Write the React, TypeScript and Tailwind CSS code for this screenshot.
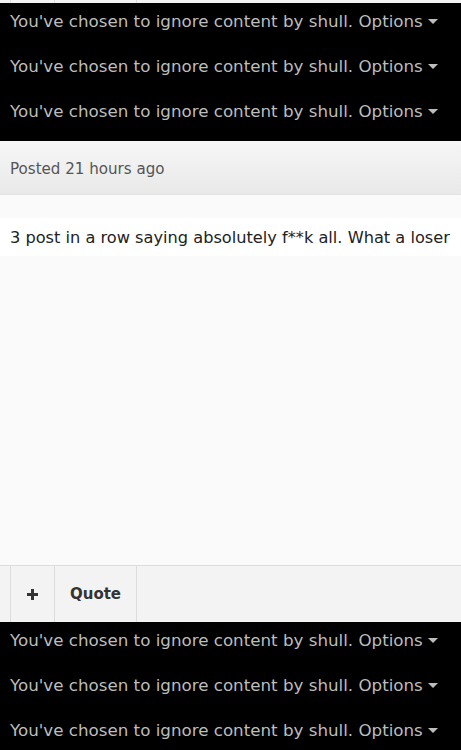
const font = { fontFamily: '"DejaVu Sans", "Liberation Sans", sans-serif' };

function IgnoredRow() {
  return (
    <div className="flex h-[45px] items-start pt-[6px] pl-[10px] text-[16.7px] leading-6 text-[#bdbdbd]">
      <span>You've chosen to ignore content by shull. Options</span>
      <svg className="ml-[5px] mt-[10px]" width="10" height="6" viewBox="0 0 10 6">
        <path d="M0 0 L10 0 L5 5 Z" fill="#bdbdbd" />
      </svg>
    </div>
  );
}

function ToolbarCells({ children }: { children?: [React.ReactNode, React.ReactNode] }) {
  return (
    <div className="flex h-full bg-[#f3f3f3]">
      <div className="w-[11px] border-r border-[#dcdcdc]" />
      <div className="flex w-[44px] items-center justify-center border-r border-[#dcdcdc]">
        {children?.[0]}
      </div>
      <div className="flex w-[82px] items-center justify-center border-r border-[#dcdcdc] text-[15px] font-bold text-[#333]">
        {children?.[1]}
      </div>
    </div>
  );
}

export default function App() {
  return (
    <div className="h-[750px] w-[461px] overflow-hidden bg-[#fafafa]" style={font}>
      <div className="h-[3px]">
        <ToolbarCells />
      </div>
      <div className="h-[138px] bg-black">
        <IgnoredRow />
        <IgnoredRow />
        <IgnoredRow />
      </div>
      <div className="flex h-[54px] items-center border-b border-[#e2e2e2] bg-gradient-to-b from-[#f6f6f6] to-[#e9e9e9] px-[10px] pt-[4px] text-[15.1px] text-[#555]">
        Posted 21 hours ago
      </div>
      <div className="h-[370px] pt-[23px]">
        <div className="flex h-[38px] items-center bg-white pl-[10px] pt-[2px] text-[16.2px] text-[#222]">
          3 post in a row saying absolutely f**k all. What a loser
        </div>
      </div>
      <div className="h-[57px] border-t border-[#dcdcdc]">
        <ToolbarCells>
          <svg width="13" height="13" viewBox="0 0 13 13">
            <path d="M6.5 1 V12 M1 6.5 H12" stroke="#333" strokeWidth="3" />
          </svg>
          Quote
        </ToolbarCells>
      </div>
      <div className="h-[128px] bg-black">
        <IgnoredRow />
        <IgnoredRow />
        <IgnoredRow />
      </div>
    </div>
  );
}
